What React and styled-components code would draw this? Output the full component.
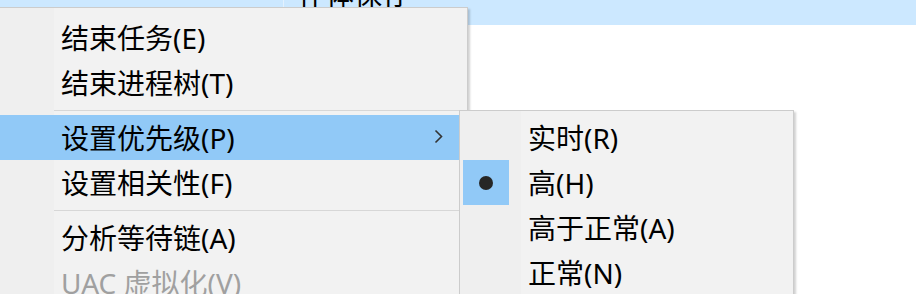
import styled, { createGlobalStyle } from "styled-components"

const GlobalStyle = createGlobalStyle`
  html, body {
    margin: 0;
    padding: 0;
    background: #ffffff;
  }
  body {
    font-family: "Noto Sans", "Noto Sans CJK SC", sans-serif;
  }
`

const Screen = styled.div`
  position: relative;
  width: 916px;
  height: 294px;
  overflow: hidden;
  background: #ffffff;
`

const SelectedRow = styled.div`
  display: flex;
  height: 25px;
  background: #cce8ff;
`

const RowCell = styled.div`
  display: flex;
  align-items: flex-end;
  width: ${p => p.$width ? `${p.$width}px` : "auto"};
  flex: ${p => p.$width ? "none" : "1"};
  padding-left: ${p => p.$pad || 0}px;
  border-right: ${p => p.$divider ? "1px solid #e3f1fe" : "none"};
  overflow: hidden;
`

const CellText = styled.span`
  font-size: 28px;
  line-height: 30px;
  margin-bottom: 16px;
  color: #000;
  white-space: nowrap;
`

const Menu = styled.div`
  position: absolute;
  left: ${p => p.$left}px;
  top: ${p => p.$top}px;
  width: ${p => p.$width}px;
  padding: ${p => p.$padTop}px 0 4px;
  background: linear-gradient(
    to right,
    #efefef 0,
    #efefef ${p => p.$gutter}px,
    #f2f2f2 ${p => p.$gutter}px
  );
  border: 1px solid #cccccc;
  box-shadow: 2px 2px 2px rgba(0, 0, 0, 0.18);
  box-sizing: border-box;
  z-index: ${p => p.$z};
`

const Item = styled.div`
  display: flex;
  align-items: center;
  height: 45px;
  margin-right: 3px;
  background: ${p => p.$hot ? "#91c9f7" : "transparent"};
  color: ${p => p.$disabled ? "#a0a0a0" : "#000000"};
  font-size: 28px;
`

const Gutter = styled.div`
  display: flex;
  align-items: center;
  align-self: stretch;
  width: ${p => p.$width}px;
  flex: none;
  padding-left: 3px;
  box-sizing: border-box;
`

const Check = styled.div`
  display: flex;
  align-items: center;
  justify-content: center;
  width: 46px;
  height: 45px;
  background: #91c9f7;
`

const Bullet = styled.span`
  width: 14px;
  height: 14px;
  border-radius: 50%;
  background: #262626;
`

const Label = styled.span`
  flex: 1;
  padding-left: 7px;
  padding-bottom: 2px;
  white-space: nowrap;
`

const Arrow = styled.span`
  display: flex;
  align-items: center;
  width: 30px;
  padding-bottom: 2px;
`

const Separator = styled.div`
  display: flex;
  align-items: center;
  height: 10px;
  padding-left: ${p => p.$indent}px;
  margin-right: 6px;

  &::after {
    content: "";
    flex: 1;
    height: 1px;
    background: #d7d7d7;
  }
`

const ChevronRight = () => (
  <svg width="9" height="15" viewBox="0 0 9 15">
    <path d="M1.5 1.5 L7.5 7.5 L1.5 13.5" fill="none" stroke="#333" strokeWidth="1.6" />
  </svg>
)

const mainItems = [
  { label: "结束任务(E)" },
  { label: "结束进程树(T)" },
  { sep: true },
  { label: "设置优先级(P)", hot: true, sub: true },
  { label: "设置相关性(F)" },
  { sep: true },
  { label: "分析等待链(A)" },
  { label: "UAC 虚拟化(V)", disabled: true },
]

const priorities = [
  { label: "实时(R)" },
  { label: "高(H)", checked: true },
  { label: "高于正常(A)" },
  { label: "正常(N)" },
]

const App = () => {
  return (
    <Screen>
      <GlobalStyle />
      <SelectedRow>
        <RowCell $width={283} $divider />
        <RowCell $pad={14}>
          <CellText>作体保存</CellText>
        </RowCell>
      </SelectedRow>

      <Menu $left={-10} $top={7} $width={478} $padTop={7} $gutter={63} $z={1}>
        {mainItems.map((it, i) =>
          it.sep ? (
            <Separator key={i} $indent={63} />
          ) : (
            <Item key={i} $hot={it.hot} $disabled={it.disabled}>
              <Gutter $width={63} />
              <Label>{it.label}</Label>
              {it.sub && (
                <Arrow>
                  <ChevronRight />
                </Arrow>
              )}
            </Item>
          )
        )}
      </Menu>

      <Menu $left={459} $top={110} $width={335} $padTop={4} $gutter={61} $z={2}>
        {priorities.map((p, i) => (
          <Item key={i}>
            <Gutter $width={61}>
              {p.checked && (
                <Check>
                  <Bullet />
                </Check>
              )}
            </Gutter>
            <Label>{p.label}</Label>
          </Item>
        ))}
      </Menu>
    </Screen>
  )
}

export default App
